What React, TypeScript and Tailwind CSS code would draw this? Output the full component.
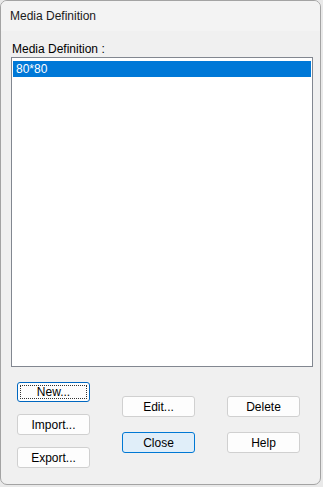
import React from 'react';

const font = { fontFamily: '"Liberation Sans", Arial, sans-serif' };

interface DlgButtonProps {
  label: string;
  variant?: 'normal' | 'focus' | 'default';
}

const DlgButton: React.FC<DlgButtonProps> = ({ label, variant = 'normal' }) => {
  if (variant === 'focus') {
    return (
      <button className="w-[73px] h-[20px] rounded-[3px] border border-[#0067c0] bg-[#fdfdfd] p-[2px] text-[12px] text-black leading-none">
        <span className="flex h-full w-full items-center justify-center border border-dotted border-[#333]">
          {label}
        </span>
      </button>
    );
  }
  return (
    <button
      className={`w-[73px] h-[21px] rounded-[3px] border text-[12px] text-black leading-none flex items-center justify-center ${
        variant === 'default' ? 'border-[#0078d4] bg-[#e0eef9]' : 'border-[#d0d0d0] bg-[#fdfdfd]'
      }`}
    >
      {label}
    </button>
  );
};

export default function App() {
  return (
    <div className="w-[323px] h-[487px] bg-[#e9e9e9] overflow-hidden" style={font}>
      <div className="w-[321px] h-[485px] rounded-[7px] border border-[#a3a3a3] bg-[#f0f0f0] flex flex-col overflow-hidden">
        {/* Title bar */}
        <div className="h-[30px] bg-[#f3f3f3] flex items-center pl-[9px] text-[12px] text-[#1a1a1a] shrink-0">
          Media Definition
        </div>

        {/* Client area */}
        <div className="flex flex-col pl-[10px] pt-[11px]">
          <div className="text-[12px] leading-[14px] text-black pl-[1px]">Media Definition :</div>
          <div className="mt-[1px] w-[302px] h-[310px] border border-[#828790] bg-white pt-[3px] px-[1px]">
            <div className="h-[16px] bg-[#0078d7] text-white text-[12px] leading-[16px] pl-[3px]">80*80</div>
          </div>

          {/* Buttons */}
          <div className="flex">
            <div className="flex flex-col gap-[12px] ml-[6px] mt-[15px]">
              <DlgButton label="New..." variant="focus" />
              <DlgButton label="Import..." />
              <DlgButton label="Export..." />
            </div>
            <div className="flex flex-col gap-[15px] ml-[32px] mt-[29px]">
              <DlgButton label="Edit..." />
              <DlgButton label="Close" variant="default" />
            </div>
            <div className="flex flex-col gap-[15px] ml-[32px] mt-[29px]">
              <DlgButton label="Delete" />
              <DlgButton label="Help" />
            </div>
          </div>
        </div>
      </div>
    </div>
  );
}
